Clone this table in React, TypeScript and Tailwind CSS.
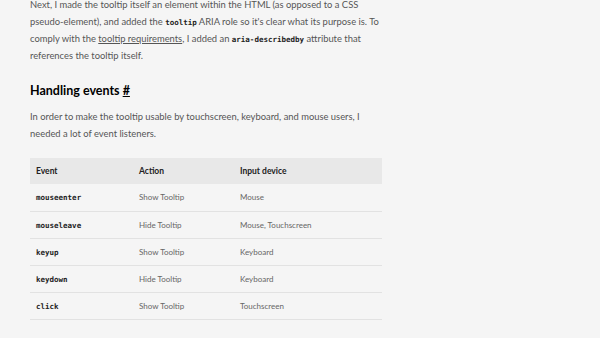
const ROWS = [
  { event: "mouseenter", action: "Show Tooltip", device: "Mouse" },
  { event: "mouseleave", action: "Hide Tooltip", device: "Mouse, Touchscreen" },
  { event: "keyup", action: "Show Tooltip", device: "Keyboard" },
  { event: "keydown", action: "Hide Tooltip", device: "Keyboard" },
  { event: "click", action: "Show Tooltip", device: "Touchscreen" },
];

const mono = "font-['DejaVu_Sans_Mono',monospace] font-bold text-[#222] leading-none";

export default function App() {
  return (
    <div className="h-[338px] w-[600px] overflow-hidden bg-[#f5f5f5] font-['Lato',sans-serif] text-[#555]">
      <div className="ml-[30px] w-[352px] -mt-[4px]">
        <div className="text-[9.4px] leading-[17px] whitespace-nowrap">
          <div>Next, I made the tooltip itself an element within the HTML (as opposed to a CSS</div>
          <div>
            pseudo-element), and added the <code className={`${mono} text-[7.5px]`}>tooltip</code> ARIA
            role so it's clear what its purpose is. To
          </div>
          <div>
            comply with the <a className="underline">tooltip requirements</a>, I added an{" "}
            <code className={`${mono} text-[7.5px]`}>aria-describedby</code> attribute that
          </div>
          <div>references the tooltip itself.</div>
        </div>

        <h2 className="mt-[17px] text-[12.5px] font-bold text-black leading-[20px]">
          Handling events <a className="underline">#</a>
        </h2>

        <div className="mt-[7px] text-[9.4px] leading-[17px] whitespace-nowrap">
          <div>In order to make the tooltip usable by touchscreen, keyboard, and mouse users, I</div>
          <div>needed a lot of event listeners.</div>
        </div>

        <table className="mt-[16px] w-full border-collapse text-[8px] text-[#666]">
          <thead>
            <tr className="bg-[#e8e8e8] h-[26px] text-left text-[8.5px]">
              <th className="pl-[6px] w-[109px] font-bold text-[#222]">Event</th>
              <th className="w-[101px] font-bold text-[#222]">Action</th>
              <th className="font-bold text-[#222]">Input device</th>
            </tr>
          </thead>
          <tbody>
            {ROWS.map((r) => (
              <tr key={r.event} className="h-[27px] border-b border-[#e2e2e2]">
                <td className="pl-[6px]">
                  <code className={`${mono} text-[7.5px]`}>{r.event}</code>
                </td>
                <td>{r.action}</td>
                <td>{r.device}</td>
              </tr>
            ))}
          </tbody>
        </table>
      </div>
    </div>
  );
}
